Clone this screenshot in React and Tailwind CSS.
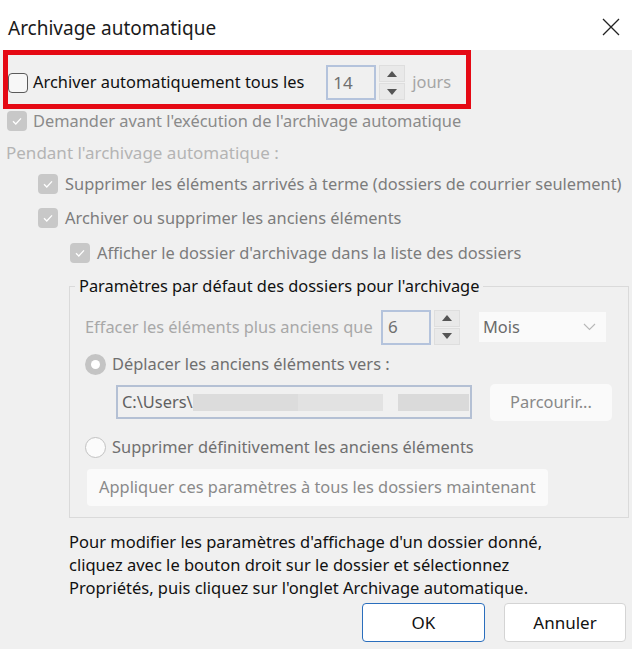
const font = { fontFamily: '"Noto Sans", "Open Sans", sans-serif' };

const Check = ({ checked }) => {
  if (!checked) {
    return <span className="w-[20px] h-[20px] rounded-[4px] border border-[#5a5a5a] bg-[#f7f7f7] shrink-0" />;
  }
  return (
    <span className="w-[20px] h-[20px] rounded-[4px] bg-[#c8c8c8] shrink-0 flex items-center justify-center">
      <svg width="12" height="12" viewBox="0 0 12 12">
        <path d="M2 6.2 L4.8 9 L10 3.4" fill="none" stroke="#ffffff" strokeWidth="1.3" />
      </svg>
    </span>
  );
};

const Radio = ({ checked }) =>
  checked ? (
    <span className="w-[21px] h-[21px] rounded-full bg-[#c4c4c4] shrink-0 flex items-center justify-center">
      <span className="w-[9px] h-[9px] rounded-full bg-white" />
    </span>
  ) : (
    <span className="w-[21px] h-[21px] rounded-full border border-[#c2c2c2] bg-[#fbfbfb] shrink-0" />
  );

const Spinner = () => (
  <div className="flex flex-col gap-[1px] w-[26px] h-[35px] ml-[3px]">
    <div className="flex-1 bg-[#e9e9e9] border border-[#dedede] flex items-center justify-center">
      <svg width="10" height="6" viewBox="0 0 10 6"><path d="M0 6 L5 0 L10 6 Z" fill="#555" /></svg>
    </div>
    <div className="flex-1 bg-[#e9e9e9] border border-[#dedede] flex items-center justify-center">
      <svg width="10" height="6" viewBox="0 0 10 6"><path d="M0 0 L10 0 L5 6 Z" fill="#555" /></svg>
    </div>
  </div>
);

const NumBox = ({ value }) => (
  <div className="w-[50px] h-[35px] border-2 border-[#b4c3dc] bg-[#f0f0f0] flex items-center pl-[5px] text-[17px] text-[#6f6f6f]">
    {value}
  </div>
);

const App = () => {
  return (
    <div className="w-[632px] h-[649px] bg-[#f0f0f0] flex flex-col overflow-hidden whitespace-nowrap" style={font}>
      <div className="h-[50px] bg-white flex items-center justify-between pl-[8px] pr-[12px] shrink-0">
        <span className="text-[19px] text-[#1a1a1a] mt-[6px]">Archivage automatique</span>
        <svg width="18" height="18" viewBox="0 0 18 18" className="mt-[3px]">
          <path d="M1 1 L17 17 M17 1 L1 17" stroke="#222" strokeWidth="1.3" />
        </svg>
      </div>

      <div className="ml-[3px] w-[468px] h-[59px] border-[5px] border-[#e50914] flex items-center pt-[6px] text-[16.4px] shrink-0">
        <Check />
        <span className="ml-[5px] text-[#111]">Archiver automatiquement tous les</span>
        <div className="ml-[22px] flex items-center">
          <NumBox value="14" />
          <Spinner />
          <span className="ml-[7px] text-[#a5a5a5]">jours</span>
        </div>
      </div>

      <div className="h-[24px] flex items-center pl-[7px] text-[16.4px] text-[#8a8a8a] shrink-0">
        <Check checked />
        <span className="ml-[6px]">Demander avant l'exécution de l'archivage automatique</span>
      </div>

      <div className="h-[40px] flex items-center pl-[6px] text-[17px] text-[#b4b4b4] shrink-0">
        Pendant l'archivage automatique :
      </div>

      <div className="h-[22px] flex items-center pl-[38px] text-[16.4px] text-[#7c7c7c] shrink-0">
        <Check checked />
        <span className="ml-[7px]">Supprimer les éléments arrivés à terme (dossiers de courrier seulement)</span>
      </div>

      <div className="h-[22px] mt-[12px] flex items-center pl-[38px] text-[16.4px] text-[#7c7c7c] shrink-0">
        <Check checked />
        <span className="ml-[7px]">Archiver ou supprimer les anciens éléments</span>
      </div>

      <div className="h-[22px] mt-[13px] flex items-center pl-[70px] text-[16.4px] text-[#7c7c7c] shrink-0">
        <Check checked />
        <span className="ml-[7px]">Afficher le dossier d'archivage dans la liste des dossiers</span>
      </div>

      <fieldset className="ml-[69px] w-[560px] h-[244px] mt-[10px] border border-[#dadada] shrink-0">
        <legend className="ml-[5px] px-[4px] text-[16.4px] text-[#111]">
          Paramètres par défaut des dossiers pour l'archivage
        </legend>

        <div className="pl-[15px] text-[16.4px]">
          <div className="flex items-center mt-[11px] h-[35px]">
            <span className="text-[#a8a8a8] w-[296px]">Effacer les éléments plus anciens que</span>
            <NumBox value="6" />
            <Spinner />
            <div className="ml-[19px] w-[127px] h-[30px] bg-[#fafafa] flex items-center justify-between pl-[4px] pr-[10px] text-[#6a6a6a]">
              <span>Mois</span>
              <svg width="13" height="8" viewBox="0 0 13 8"><path d="M1 1 L6.5 6.5 L12 1" fill="none" stroke="#b8b8b8" strokeWidth="1.1" /></svg>
            </div>
          </div>

          <div className="flex items-center mt-[8px] h-[24px] text-[#6f6f6f]">
            <Radio checked />
            <span className="ml-[6px]">Déplacer les anciens éléments vers :</span>
          </div>

          <div className="flex items-center mt-[7px]">
            <div className="ml-[31px] w-[356px] h-[34px] border-2 border-[#b4c0d4] bg-[#f0f0f0] flex items-center pl-[4px] text-[#606060]">
              <span>C:\Users\</span>
              <span className="w-[105px] h-[17px] bg-[#dcdcdc]" />
              <span className="w-[85px] h-[17px] bg-[#e2e2e2]" />
              <span className="w-[15px]" />
              <span className="w-[71px] h-[17px] bg-[#dadada]" />
            </div>
            <div className="ml-[18px] w-[122px] h-[37px] rounded-[5px] bg-[#fafafa] flex items-center justify-center text-[#888]">
              Parcourir...
            </div>
          </div>

          <div className="flex items-center mt-[15px] h-[24px] text-[#6f6f6f]">
            <Radio />
            <span className="ml-[6px]">Supprimer définitivement les anciens éléments</span>
          </div>

          <div className="mt-[9px] ml-[2px] w-[461px] h-[37px] rounded-[4px] bg-[#fafafa] flex items-center pl-[12px] text-[#8a8a8a]">
            Appliquer ces paramètres à tous les dossiers maintenant
          </div>
        </div>
      </fieldset>

      <div className="ml-[69px] mt-[12px] text-[16.5px] leading-[23px] text-[#111] shrink-0">
        <div>Pour modifier les paramètres d'affichage d'un dossier donné,</div>
        <div>cliquez avec le bouton droit sur le dossier et sélectionnez</div>
        <div>Propriétés, puis cliquez sur l'onglet Archivage automatique.</div>
      </div>

      <div className="flex justify-end gap-[19px] pr-[6px] mt-[4px] shrink-0">
        <button className="w-[123px] h-[39px] rounded-[4px] bg-white border border-[#2a6ebd] text-[17px] text-[#111]">
          OK
        </button>
        <button className="w-[122px] h-[39px] rounded-[4px] bg-white border border-[#d4d4d4] text-[17px] text-[#111]">
          Annuler
        </button>
      </div>
    </div>
  );
};

export default App;
